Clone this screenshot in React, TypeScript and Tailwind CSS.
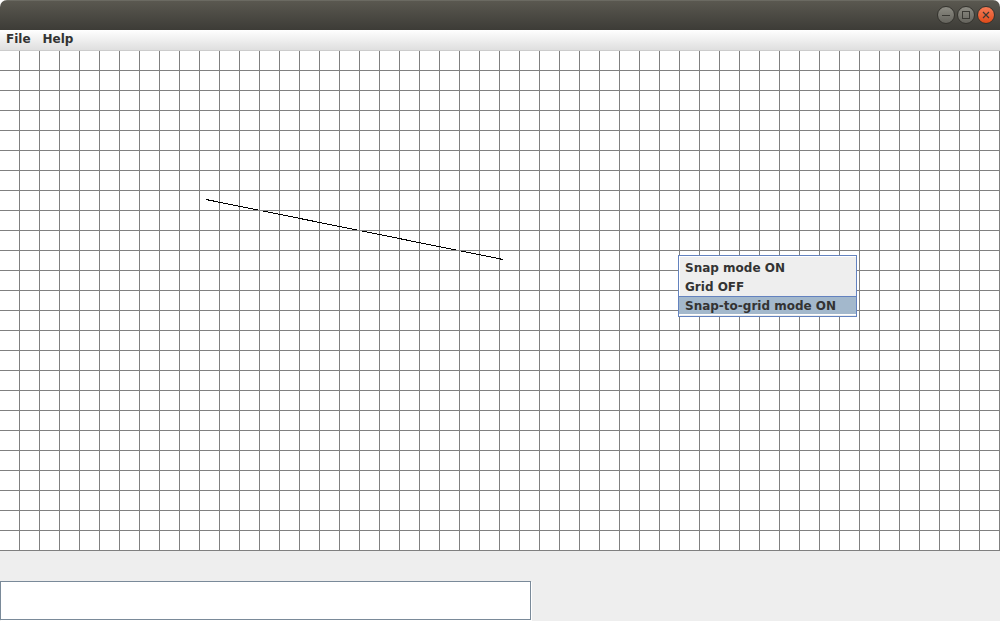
import React from "react";

const menuItems = ["Snap mode ON", "Grid OFF", "Snap-to-grid mode ON"];

type WindowButtonProps = { label: string; close?: boolean; children: React.ReactNode };

function WindowButton({ label, close, children }: WindowButtonProps) {
  return (
    <button
      type="button"
      aria-label={label}
      className={
        close
          ? "h-[18px] w-[18px] rounded-full border border-[#34332e] bg-linear-to-b from-[#f57b55] to-[#df4a16]"
          : "h-[18px] w-[18px] rounded-full border border-[#34332e] bg-linear-to-b from-[#8c8b83] to-[#65645d]"
      }
    >
      <svg viewBox="0 0 16 16" className="block h-4 w-4" fill="none" stroke="#3a3934" shapeRendering={close ? "auto" : "crispEdges"}>
        {children}
      </svg>
    </button>
  );
}

function DrawingCanvas() {
  return (
    <svg className="block h-full w-full" role="img" aria-label="Drawing canvas" shapeRendering="crispEdges">
      <defs>
        <pattern id="columns" width="20" height="20" patternUnits="userSpaceOnUse">
          <rect x="19" width="1" height="20" fill="#808080" />
        </pattern>
        <pattern id="rows" width="20" height="20" patternUnits="userSpaceOnUse">
          <rect y="19" width="20" height="1" fill="#808080" />
        </pattern>
      </defs>
      <rect width="100%" height="100%" fill="#fff" />
      <rect width="100%" height="100%" fill="url(#columns)" />
      <line x1="206" y1="148.5" x2="503" y2="208.5" stroke="#000" />
      <rect width="100%" height="100%" fill="url(#rows)" />
    </svg>
  );
}

export default function App() {
  return (
    <div className="bg-white font-['DejaVu_Sans',sans-serif] text-xs font-bold text-[#333]">
      <div className="flex min-h-screen flex-col overflow-hidden rounded-t-[7px] bg-[#eee]">
        <header className="flex h-[30px] shrink-0 items-center justify-end gap-[2px] border-t border-[#6b6a62] bg-linear-to-b from-[#5a5850] to-[#3d3c37] pr-[5px] pb-px">
          <WindowButton label="Minimize">
            <path d="M4 8.5h8" />
          </WindowButton>
          <WindowButton label="Maximize">
            <path d="M4.5 4.5h7v7h-7z" />
          </WindowButton>
          <WindowButton label="Close" close>
            <path d="M5 5l6 6M11 5l-6 6" strokeWidth="1.2" />
          </WindowButton>
        </header>
        <nav className="flex h-[21px] shrink-0 items-center gap-3 border-b border-[#ccc] bg-linear-to-b from-white to-[#dfdfdf] px-1.5 pb-[2px]">
          <button type="button" className="leading-[18px]">File</button>
          <button type="button" className="leading-[18px]">Help</button>
        </nav>
        <main className="relative h-[500px] shrink-0">
          <DrawingCanvas />
          <div
            role="menu"
            className="absolute top-[204px] left-[678px] flex w-[179px] flex-col border border-[#6382bf] bg-[#eee] pt-[2px] pb-px shadow-[inset_1px_1px_0_#fff]"
          >
            {menuItems.map((item, index) => (
              <button
                key={item}
                type="button"
                role="menuitem"
                className={
                  index === 2
                    ? "h-[19px] border-t border-b border-t-[#6382bf] border-b-white bg-[#a3b8cc] px-1.5 pt-px text-left leading-4 whitespace-nowrap"
                    : "h-[19px] px-1.5 pt-px text-left leading-[18px] whitespace-nowrap"
                }
              >
                {item}
              </button>
            ))}
          </div>
        </main>
        <footer className="pt-[30px]">
          <textarea
            aria-label="Messages"
            className="block h-[39px] w-[53.1%] resize-none border border-[#7a8a99] bg-white px-1 font-normal shadow-[1px_1px_0_#fff] outline-none"
          />
        </footer>
      </div>
    </div>
  );
}
